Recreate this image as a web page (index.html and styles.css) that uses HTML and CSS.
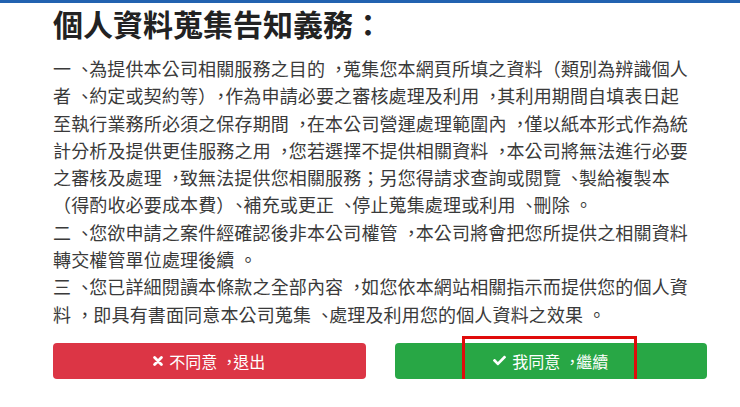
FILE: index.html
```html
<!DOCTYPE html>
<html lang="zh-TW">
<head>
<meta charset="utf-8">
<title>個人資料蒐集告知義務</title>
<link rel="stylesheet" href="styles.css">
</head>
<body>
<div class="page">
  <h3 class="title">個人資料蒐集告知義務：</h3>
  <div class="content">
    <p>一<span class="pc">、</span>為提供本公司相關服務之目的<span class="pc">，</span>蒐集您本網頁所填之資料（類別為辨識個人者<span class="pc">、</span>約定或契約等）<span class="pc">，</span>作為申請必要之審核處理及利用<span class="pc">，</span>其利用期間自填表日起至執行業務所必須之保存期間<span class="pc">，</span>在本公司營運處理範圍內<span class="pc">，</span>僅以紙本形式作為統計分析及提供更佳服務之用<span class="pc">，</span>您若選擇不提供相關資料<span class="pc">，</span>本公司將無法進行必要之審核及處理<span class="pc">，</span>致無法提供您相關服務；另您得請求查詢或閱覽<span class="pc">、</span>製給複製本（得酌收必要成本費）<span class="pc">、</span>補充或更正<span class="pc">、</span>停止蒐集處理或利用<span class="pc">、</span>刪除<span class="pc">。</span></p>
    <p>二<span class="pc">、</span>您欲申請之案件經確認後非本公司權管<span class="pc">，</span>本公司將會把您所提供之相關資料轉交權管單位處理後續<span class="pc">。</span></p>
    <p>三<span class="pc">、</span>您已詳細閱讀本條款之全部內容<span class="pc">，</span>如您依本網站相關指示而提供您的個人資料<span class="pc">，</span> 即具有書面同意本公司蒐集<span class="pc">、</span>處理及利用您的個人資料之效果<span class="pc">。</span></p>
  </div>
  <div class="actions">
    <button class="btn btn-danger" type="button">
      <svg class="icon icon-x" viewBox="0 0 10 10" aria-hidden="true"><path d="M1.6 1.6 L8.4 8.4 M8.4 1.6 L1.6 8.4" stroke="#fff" stroke-width="2.8" stroke-linecap="round" fill="none"/></svg>
      <span>不同意<span class="pc">，</span>退出</span>
    </button>
    <button class="btn btn-success" type="button">
      <svg class="icon icon-check" viewBox="0 0 512 512" aria-hidden="true"><path fill="#fff" d="M173.898 439.404l-166.4-166.4c-9.997-9.997-9.997-26.206 0-36.204l36.203-36.204c9.997-9.998 26.207-9.998 36.204 0L192 312.69 432.095 72.596c9.997-9.997 26.207-9.997 36.204 0l36.203 36.204c9.997 9.997 9.997 26.206 0 36.204l-294.4 294.401c-9.998 9.997-26.207 9.997-36.204-.001z"/></svg>
      <span>我同意<span class="pc">，</span>繼續</span>
      <span class="highlight"></span>
    </button>
  </div>
</div>
</body>
</html>
```
FILE: styles.css
```css
html, body {
  margin: 0;
  padding: 0;
  background: #fff;
}
body {
  font-family: "Noto Sans CJK TC", sans-serif;
  color: #333;
  border-top: 3px solid #2262b0;
}
.page {
  padding: 2px 33px 0 53px;
}
.title {
  margin: 0;
  font-size: 30px;
  line-height: 36px;
  font-weight: 700;
  color: #222;
}
.content {
  margin-top: 14px;
  width: 640px;
  font-size: 18px;
  letter-spacing: 0.15px;
  line-height: 27.3px;
  color: #3a3a3a;
}
.content p {
  margin: 0;
}
/* punctuation kept at a 1em advance, glyph nudged toward the middle of its cell */
.pc {
  padding-left: 0.25em;
  letter-spacing: -0.25em;
}
.actions {
  margin-top: 15px;
  display: grid;
  grid-template-columns: 1fr 1fr;
  column-gap: 29px;
}
.btn {
  position: relative;
  height: 36px;
  border: none;
  border-radius: 4px;
  color: #fff;
  font-family: "Noto Sans CJK TC", sans-serif;
  font-size: 16px;
  display: flex;
  align-items: center;
  justify-content: center;
  gap: 6px;
  padding: 0;
}
.btn-danger {
  background: #dc3545;
}
.btn-success {
  background: #28a745;
}
.icon {
  display: block;
}
.icon-x {
  width: 10px;
  height: 10px;
}
.icon-check {
  width: 13px;
  height: 13px;
}
.highlight {
  position: absolute;
  left: 67px;
  top: -7px;
  width: 175px;
  height: 50px;
  box-sizing: border-box;
  border: 3px solid #e00b0b;
}
```
